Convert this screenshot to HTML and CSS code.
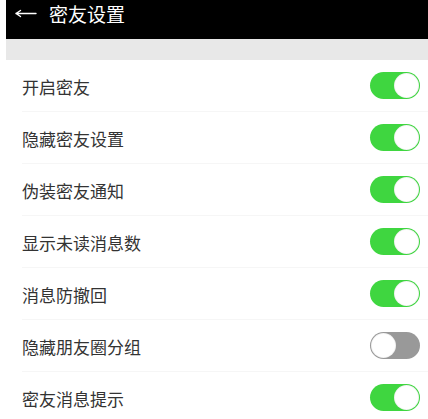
FILE: index.html
```html
<!DOCTYPE html>
<html lang="zh">
<head>
<meta charset="utf-8">
<title>密友设置</title>
<link rel="stylesheet" href="styles.css">
</head>
<body>
<div class="page">
  <header class="topbar">
    <svg class="back" width="22" height="28" viewBox="0 0 22 28" aria-label="返回">
      <path d="M1 13.5 H21 M1 13.5 L5.5 10.5 M1 13.5 L5.5 16.5" fill="none" stroke="#ffffff" stroke-width="1.4" stroke-linecap="round"/>
    </svg>
    <span class="title">密友设置</span>
  </header>
  <div class="band"></div>
  <ul class="list">
    <li class="row"><span class="label">开启密友</span><span class="switch on"><span class="knob"></span></span></li>
    <li class="row"><span class="label">隐藏密友设置</span><span class="switch on"><span class="knob"></span></span></li>
    <li class="row"><span class="label">伪装密友通知</span><span class="switch on"><span class="knob"></span></span></li>
    <li class="row"><span class="label">显示未读消息数</span><span class="switch on"><span class="knob"></span></span></li>
    <li class="row"><span class="label">消息防撤回</span><span class="switch on"><span class="knob"></span></span></li>
    <li class="row"><span class="label">隐藏朋友圈分组</span><span class="switch off"><span class="knob"></span></span></li>
    <li class="row"><span class="label">密友消息提示</span><span class="switch on"><span class="knob"></span></span></li>
  </ul>
</div>
</body>
</html>
```

FILE: styles.css
```css
html, body {
  margin: 0;
  padding: 0;
  background: #ffffff;
  font-family: "Noto Sans CJK SC", "Noto Sans", sans-serif;
}
.page {
  margin-left: 6px;
  width: 422px;
}
.topbar {
  height: 39px;
  background: #000000;
  color: #ffffff;
  display: flex;
  align-items: flex-start;
  padding-left: 9px;
  box-sizing: border-box;
}
.back {
  display: block;
  margin-right: 12px;
}
.title {
  font-size: 19px;
  line-height: 28px;
}
.band {
  height: 21px;
  background: #e8e8e8;
}
.list {
  list-style: none;
  margin: 0;
  padding: 0 0 0 16px;
}
.row {
  height: 52px;
  display: flex;
  align-items: center;
  justify-content: space-between;
  padding-right: 8px;
  border-bottom: 1px solid #f6f6f6;
  box-sizing: border-box;
}
.label {
  font-size: 17px;
  color: #333333;
  padding-top: 2px;
}
.switch {
  width: 50px;
  height: 27px;
  border-radius: 14px;
  display: flex;
  align-items: center;
  box-sizing: border-box;
  padding: 0 1px;
}
.switch.on {
  background: #3fd640;
  justify-content: flex-end;
}
.switch.off {
  background: #999999;
  justify-content: flex-start;
}
.knob {
  width: 25px;
  height: 25px;
  border-radius: 50%;
  background: #ffffff;
  box-sizing: border-box;
  border: 1.5px solid rgba(0,0,0,0.05);
}
```
